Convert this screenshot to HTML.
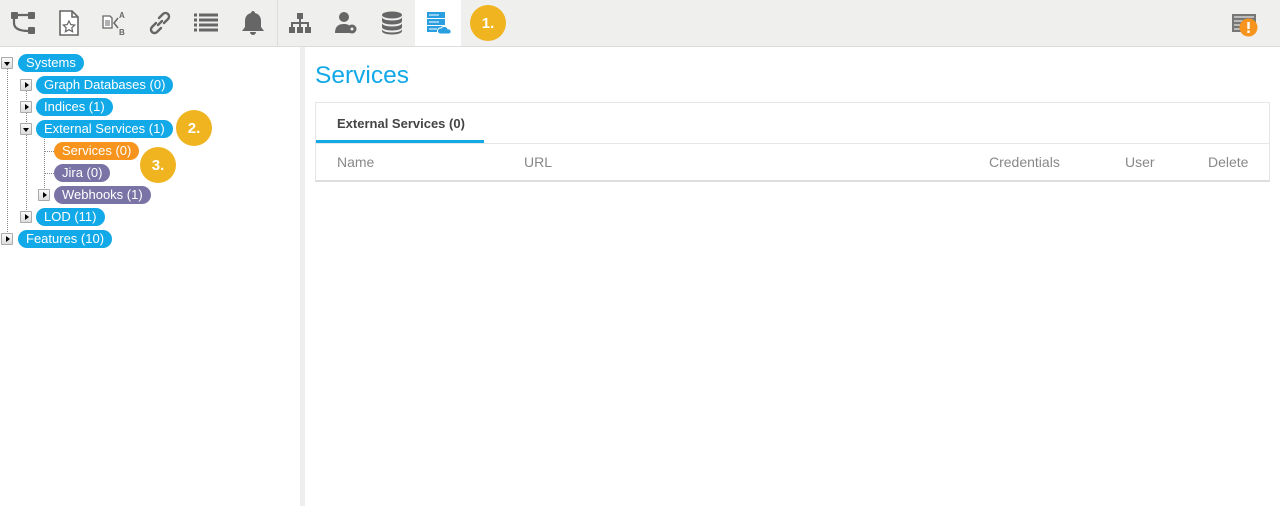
<!DOCTYPE html>
<html><head><meta charset="utf-8"><style>
*{margin:0;padding:0;box-sizing:border-box}
body{width:1280px;height:506px;overflow:hidden;background:#fff;font-family:"Liberation Sans",Arial,sans-serif;position:relative}
.tb{position:absolute;left:0;top:0;width:1280px;height:47px;background:#efefee;border-bottom:1px solid #ddd}
.ic{position:absolute;top:10px;width:26px;height:26px}
.act{position:absolute;left:415px;top:0;width:46px;height:46px;background:#fff}
.div{position:absolute;left:277px;top:0;width:1px;height:46px;background:#dcdcdc}
.badge{position:absolute;width:36px;height:36px;border-radius:50%;background:#efb41f;color:#fff;font-weight:bold;font-size:15px;line-height:38px;text-align:center}
.left{position:absolute;left:0;top:47px;width:300px;height:459px;background:#fff}
.sb{position:absolute;left:300px;top:47px;width:5px;height:459px;background:#eee}
.pill{position:absolute;height:18px;line-height:18px;border-radius:9px;color:#fff;font-size:13px;padding:0 8px;white-space:nowrap;background:#12a9e8}
.tg{position:absolute;width:12px;height:12px;background:linear-gradient(#fafafa,#ddd);border:1px solid #aaa;border-radius:1px}
.tg:after{content:"";position:absolute;left:3px;top:2px;border:3px solid transparent}
.tg.r:after{border-left:4px solid #000;left:4px;top:2px}
.tg.d:after{border-top:4px solid #000;left:2px;top:4px}
.vl{position:absolute;border-left:1px dotted #888;width:0}
.hl{position:absolute;border-top:1px dotted #888;height:0}
h1{position:absolute;left:315px;top:62px;font-size:24.5px;font-weight:normal;color:#12a9e8}
.card{position:absolute;left:315px;top:102px;width:955px;height:80px;border:1px solid #e6e6e6;border-bottom:2px solid #ddd}
.tab{position:absolute;left:0;top:0;width:168px;height:40px;border-bottom:3px solid #12a9e8;font-size:13px;font-weight:bold;color:#444;padding:13px 0 0 21px}
.line{position:absolute;left:0;top:40px;width:100%;height:1px;background:#e6e6e6}
.th{position:absolute;top:51px;font-size:14px;color:#888}
</style></head><body>
<div class="tb">
<div class="act"></div>
<div class="div"></div>
<svg class="ic" style="left:10px" viewBox="0 0 26 26"><rect x="1" y="2" width="7" height="7" rx="1" fill="#666"/><rect x="18" y="2" width="7" height="7" rx="1" fill="#666"/><rect x="18" y="17" width="7" height="7" rx="1" fill="#666"/><path d="M4 8v5q0 8 15 8M7 5h12" stroke="#666" stroke-width="2.2" fill="none"/></svg>
<svg class="ic" style="left:56px" viewBox="0 0 26 26"><path d="M4 1h12l6 6v18H4z" fill="#fff" stroke="#666" stroke-width="1.6"/><path d="M16 1v6h6" fill="none" stroke="#666" stroke-width="1.6"/><path d="M13 11l1.8 3.6 3.9.5-2.9 2.7.8 3.9-3.6-2-3.6 2 .8-3.9-2.9-2.7 3.9-.5z" fill="none" stroke="#666" stroke-width="1.2"/></svg>
<svg class="ic" style="left:101px" viewBox="0 0 26 26"><path d="M2 6h7l2 2v10H2z" fill="#fff" stroke="#666" stroke-width="1.3"/><path d="M4 11h5M4 13h5M4 15h5" stroke="#666"/><path d="M17 8l-4 5 4 5" fill="none" stroke="#666" stroke-width="1.5"/><text x="18" y="8" font-size="8" font-weight="bold" fill="#666" font-family="Liberation Sans">A</text><text x="18" y="25" font-size="8" font-weight="bold" fill="#666" font-family="Liberation Sans">B</text></svg>
<svg class="ic" style="left:147px" viewBox="0 0 26 26"><path d="M11 15l4-4M9 13l-4 4a3.5 3.5 0 0 0 5 5l4-4M17 13l4-4a3.5 3.5 0 0 0-5-5l-4 4" fill="none" stroke="#666" stroke-width="2.4" stroke-linecap="round"/></svg>
<svg class="ic" style="left:193px" viewBox="0 0 26 26"><path d="M1 5h3M6 5h19M1 10h3M6 10h19M1 15h3M6 15h19M1 20h3M6 20h19" stroke="#666" stroke-width="3"/></svg>
<svg class="ic" style="left:240px" viewBox="0 0 26 26"><path d="M13 1c-1 0-2 1-2 2-4 1-6 4-6 8v6l-3 4h22l-3-4v-6c0-4-2-7-6-8 0-1-1-2-2-2zM10 22a3 3 0 0 0 6 0z" fill="#666"/></svg>
<svg class="ic" style="left:287px" viewBox="0 0 26 26"><rect x="10" y="3" width="6" height="6" fill="#666"/><rect x="2" y="17" width="6" height="6" fill="#666"/><rect x="10" y="17" width="6" height="6" fill="#666"/><rect x="18" y="17" width="6" height="6" fill="#666"/><path d="M13 9v8M5 17v-4h16v4" fill="none" stroke="#666" stroke-width="2"/></svg>
<svg class="ic" style="left:333px" viewBox="0 0 26 26"><circle cx="11" cy="7" r="5" fill="#666"/><path d="M2 23c0-7 4-9 9-9 3 0 5 1 6 2v7z" fill="#666"/><circle cx="19" cy="19" r="4.5" fill="#666"/><circle cx="19" cy="19" r="1.5" fill="#efefee"/></svg>
<svg class="ic" style="left:379px" viewBox="0 0 26 26"><ellipse cx="13" cy="5" rx="10" ry="3.5" fill="#666"/><path d="M3 7v4c0 2 4 3.5 10 3.5S23 13 23 11V7c0 2-4 3.5-10 3.5S3 9 3 7zM3 13v4c0 2 4 3.5 10 3.5S23 19 23 17v-4c0 2-4 3.5-10 3.5S3 15 3 13zM3 19v2c0 2 4 3.5 10 3.5S23 23 23 21v-2c0 2-4 3.5-10 3.5S3 21 3 19z" fill="#666"/></svg>
<svg class="ic" style="left:425px" viewBox="0 0 26 26"><rect x="2" y="2" width="18" height="6" fill="#2a9fe0"/><rect x="2" y="9" width="18" height="6" fill="#2a9fe0"/><rect x="2" y="16" width="18" height="6" fill="#2a9fe0"/><path d="M4 5h10M4 12h10M4 19h8" stroke="#fff"/><path d="M15 24a3 3 0 0 1 1-6 4 4 0 0 1 7 1 2.5 2.5 0 0 1 1 5z" fill="#2a9fe0" stroke="#fff"/></svg>
<div class="badge" style="left:470px;top:5px">1.</div>
<svg style="position:absolute;left:1231px;top:13px" width="28" height="26" viewBox="0 0 28 26"><rect x="1" y="1" width="24" height="18" fill="#777"/><path d="M3 4h20M3 8h14M3 12h12M3 16h10" stroke="#fff" stroke-width="1"/><circle cx="17.5" cy="14.5" r="9" fill="#f7941d"/><rect x="16.3" y="9" width="2.4" height="7" fill="#fff"/><rect x="16.3" y="17.5" width="2.4" height="2.4" fill="#fff"/></svg>
</div>

<div class="left">
<div class="vl" style="left:7px;top:22px;height:169px"></div>
<div class="vl" style="left:26px;top:44px;height:125px"></div>
<div class="vl" style="left:44px;top:88px;height:59px"></div>
<div class="hl" style="left:44px;top:104px;width:10px"></div>
<div class="hl" style="left:44px;top:126px;width:10px"></div>

<div class="tg d" style="left:1px;top:10px"></div><div class="pill" style="left:18px;top:7px">Systems</div>
<div class="tg r" style="left:20px;top:32px"></div><div class="pill" style="left:36px;top:29px">Graph Databases (0)</div>
<div class="tg r" style="left:20px;top:54px"></div><div class="pill" style="left:36px;top:51px">Indices (1)</div>
<div class="tg d" style="left:20px;top:76px"></div><div class="pill" style="left:36px;top:73px">External Services (1)</div>
<div class="pill" style="left:54px;top:95px;background:#f7941d">Services (0)</div>
<div class="pill" style="left:54px;top:117px;background:#7a73a6">Jira (0)</div>
<div class="tg r" style="left:38px;top:142px"></div><div class="pill" style="left:54px;top:139px;background:#7a73a6">Webhooks (1)</div>
<div class="tg r" style="left:20px;top:164px"></div><div class="pill" style="left:36px;top:161px">LOD (11)</div>
<div class="tg r" style="left:1px;top:186px"></div><div class="pill" style="left:18px;top:183px">Features (10)</div>
<div class="badge" style="left:176px;top:63px">2.</div>
<div class="badge" style="left:140px;top:100px">3.</div>
</div>
<div class="sb"></div>

<h1>Services</h1>
<div class="card">
<div class="line"></div>
<div class="tab">External Services (0)</div>
<div class="th" style="left:21px">Name</div>
<div class="th" style="left:208px">URL</div>
<div class="th" style="left:673px">Credentials</div>
<div class="th" style="left:809px">User</div>
<div class="th" style="left:892px">Delete</div>
</div>
</body></html>
